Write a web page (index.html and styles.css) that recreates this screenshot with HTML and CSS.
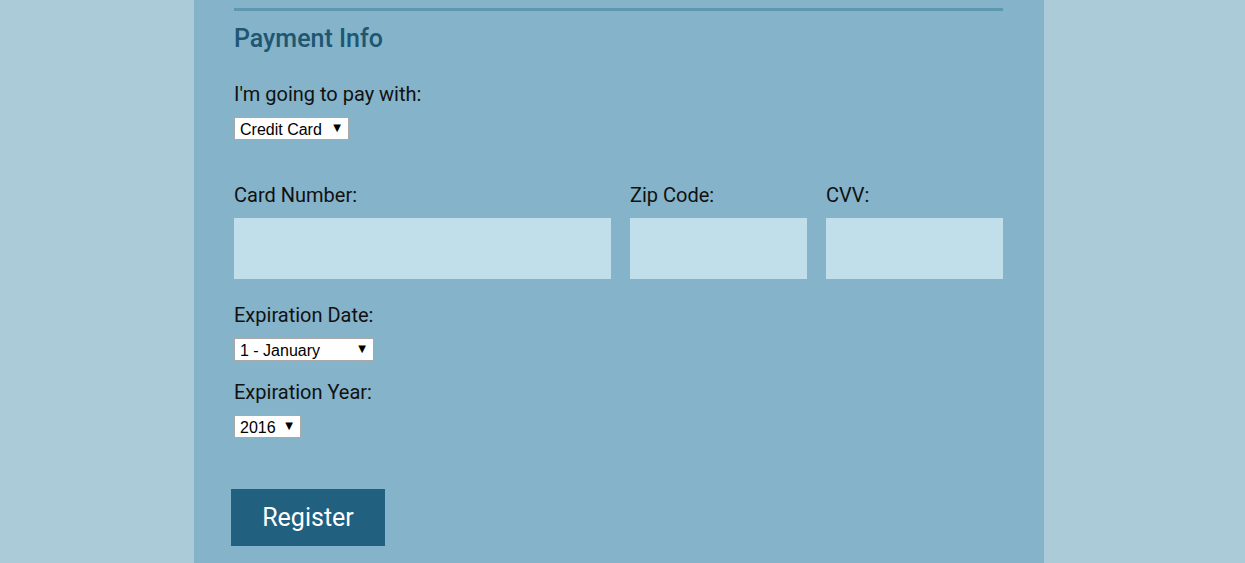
FILE: index.html
```html
<!DOCTYPE html>
<html>
<head>
<meta charset="utf-8">
<link rel="stylesheet" href="styles.css">
</head>
<body>
<div class="page">
  <form class="form">
    <section class="section">
      <h2 class="section-title">Payment Info</h2>
      <div class="field field-pay">
        <label class="label" for="payment">I'm going to pay with:</label>
        <div class="select-wrap sel-pay">
          <select id="payment" class="select">
            <option>Credit Card</option>
            <option>PayPal</option>
            <option>Bitcoin</option>
          </select>
          <span class="arrow">&#9660;</span>
        </div>
      </div>

      <div class="card-row">
        <div class="field col-num">
          <label class="label" for="cc-num">Card Number:</label>
          <input id="cc-num" class="input" type="text">
        </div>
        <div class="field col-small">
          <label class="label" for="zip">Zip Code:</label>
          <input id="zip" class="input" type="text">
        </div>
        <div class="field col-small">
          <label class="label" for="cvv">CVV:</label>
          <input id="cvv" class="input" type="text">
        </div>
      </div>

      <div class="field field-exp">
        <label class="label" for="exp-month">Expiration Date:</label>
        <div class="select-wrap sel-month">
          <select id="exp-month" class="select">
            <option>1 - January</option>
          </select>
          <span class="arrow">&#9660;</span>
        </div>
      </div>

      <div class="field field-year">
        <label class="label" for="exp-year">Expiration Year:</label>
        <div class="select-wrap sel-year">
          <select id="exp-year" class="select">
            <option>2016</option>
          </select>
          <span class="arrow">&#9660;</span>
        </div>
      </div>
    </section>

    <button type="button" class="btn">Register</button>
  </form>
</div>
</body>
</html>
```

FILE: styles.css
```css
html, body {
  margin: 0;
  padding: 0;
}
body {
  background: #abcbd8;
  font-family: Roboto, "Liberation Sans", Arial, sans-serif;
  color: #111;
  height: 563px;
  overflow: hidden;
  padding-right: 7px;
}
.page {
  width: 850px;
  margin: 0 auto;
  background: #84b3ca;
  min-height: 563px;
  box-sizing: border-box;
  padding: 8px 41px 0 40px;
}
.form {
  display: flex;
  flex-direction: column;
  align-items: flex-start;
}
.section {
  width: 100%;
  border-top: 3px solid #5e97b0;
}
.section-title {
  margin: 13px 0 0;
  font-size: 25px;
  line-height: 30px;
  font-weight: 500;
  color: #1f5671;
}
.field {
  display: flex;
  flex-direction: column;
  align-items: flex-start;
}
.label {
  display: block;
  font-size: 20px;
  line-height: 24px;
  margin-bottom: 11px;
}
.field-pay {
  margin-top: 28px;
}
.select-wrap {
  position: relative;
  height: 23px;
}
.select {
  appearance: none;
  -webkit-appearance: none;
  width: 100%;
  height: 23px;
  box-sizing: border-box;
  margin: 0;
  border: 1px solid #a9a9a9;
  border-radius: 0;
  background: #fff;
  font-family: "Liberation Sans", Arial, sans-serif;
  font-size: 16px;
  color: #000;
  padding: 1px 0 0 5px;
  outline: none;
}
.arrow {
  position: absolute;
  right: 8px;
  top: 6px;
  font-size: 10px;
  line-height: 10px;
  color: #000;
  font-family: "DejaVu Sans", sans-serif;
  pointer-events: none;
}
.sel-pay { width: 115px; }
.sel-month { width: 140px; }
.sel-year { width: 67px; }

.card-row {
  display: flex;
  gap: 19px;
  margin-top: 43px;
}
.col-num { width: 377px; }
.col-small { width: 177px; }
.input {
  width: 100%;
  height: 61px;
  box-sizing: border-box;
  border: 0;
  margin: 0;
  background: #c1dfea;
  outline: none;
}
.field-exp {
  margin-top: 24px;
}
.field-year {
  margin-top: 19px;
}
.btn {
  margin: 51px 0 0 -3px;
  width: 154px;
  height: 57px;
  border: 0;
  background: #22607f;
  color: #fff;
  font-family: Roboto, "Liberation Sans", Arial, sans-serif;
  font-size: 25px;
  padding: 0;
  cursor: pointer;
}
```
